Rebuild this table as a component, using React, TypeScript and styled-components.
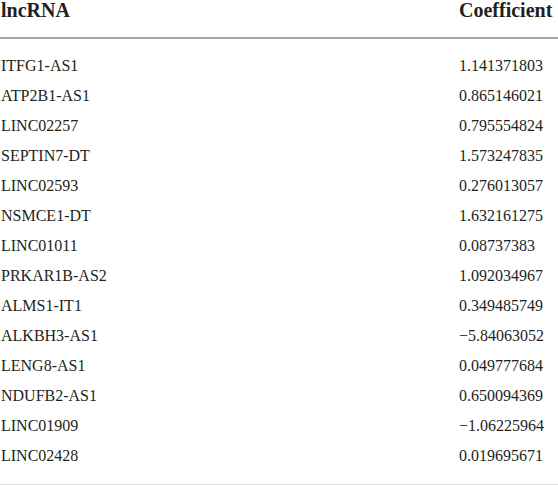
import React from "react";
import styled, { createGlobalStyle } from "styled-components";

const Global = createGlobalStyle`
  html, body { margin: 0; padding: 0; background: #ffffff; }
  body { font-family: "Liberation Serif", "Times New Roman", serif; color: #231f20; }
`;

const Table = styled.table`
  width: 558px;
  border-collapse: collapse;
  border-spacing: 0;
  border-bottom: 1px solid #dcdcdc;
  font-family: "Liberation Serif", "Times New Roman", serif;
  color: #231f20;
`;

const HeadCell = styled.th<{ $right?: boolean }>`
  font-family: "Liberation Serif", "Times New Roman", serif;
  font-size: 20px;
  font-weight: bold;
  line-height: 20px;
  text-align: left;
  padding: 0 0 17px ${(p) => (p.$right ? "0" : "1px")};
  width: ${(p) => (p.$right ? "99px" : "auto")};
  border-bottom: 2px solid #a6a6a6;
  vertical-align: top;
  white-space: nowrap;
`;

const Cell = styled.td<{ $right?: boolean; $first?: boolean; $last?: boolean }>`
  font-family: "Liberation Serif", "Times New Roman", serif;
  font-size: 16px;
  line-height: 30px;
  height: 30px;
  padding: ${(p) => (p.$first ? "12px" : "0")} 0 ${(p) => (p.$last ? "13px" : "0")} ${(p) => (p.$right ? "0" : "1px")};
  white-space: nowrap;
`;

const rows: [string, string][] = [
  ["ITFG1-AS1", "1.141371803"],
  ["ATP2B1-AS1", "0.865146021"],
  ["LINC02257", "0.795554824"],
  ["SEPTIN7-DT", "1.573247835"],
  ["LINC02593", "0.276013057"],
  ["NSMCE1-DT", "1.632161275"],
  ["LINC01011", "0.08737383"],
  ["PRKAR1B-AS2", "1.092034967"],
  ["ALMS1-IT1", "0.349485749"],
  ["ALKBH3-AS1", "\u22125.84063052"],
  ["LENG8-AS1", "0.049777684"],
  ["NDUFB2-AS1", "0.650094369"],
  ["LINC01909", "\u22121.06225964"],
  ["LINC02428", "0.019695671"],
];

export default function App() {
  return (
    <>
      <Global />
      <Table>
        <thead>
          <tr>
            <HeadCell>lncRNA</HeadCell>
            <HeadCell $right>Coefficient</HeadCell>
          </tr>
        </thead>
        <tbody>
          {rows.map(([name, val], i) => (
            <tr key={name}>
              <Cell $first={i === 0} $last={i === rows.length - 1}>{name}</Cell>
              <Cell $right $first={i === 0} $last={i === rows.length - 1}>{val}</Cell>
            </tr>
          ))}
        </tbody>
      </Table>
    </>
  );
}
